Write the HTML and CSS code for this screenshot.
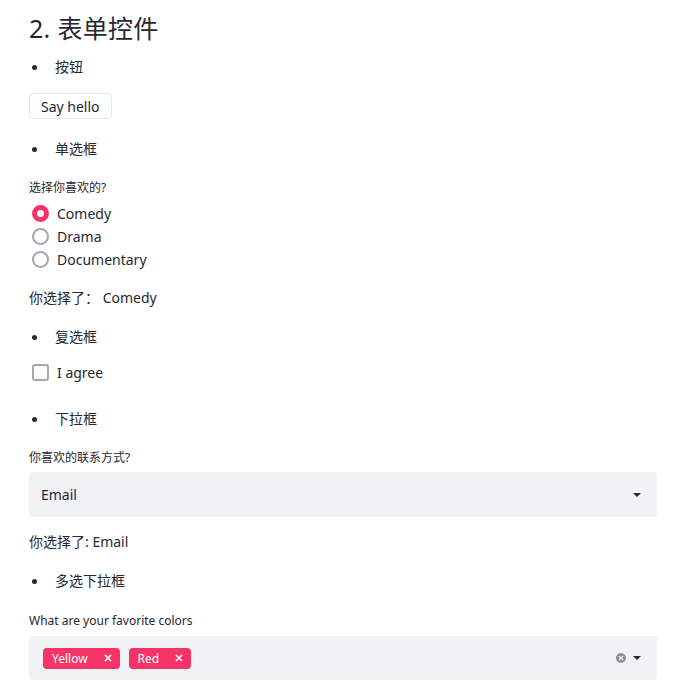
FILE: index.html
```html
<!DOCTYPE html>
<html lang="zh">
<head>
    <meta charset="UTF-8">
    <title>表单控件</title>
<link rel="stylesheet" href="styles.css">
</head>
<body>
    <div class="main">
        <h2 class="title">2. 表单控件</h2>

        <ul class="bullet"><li>按钮</li></ul>
        <button class="btn">Say hello</button>

        <ul class="bullet"><li>单选框</li></ul>
        <p class="label">选择你喜欢的?</p>
        <div class="radios">
            <div class="radio on"><span class="dot"></span>Comedy</div>
            <div class="radio"><span class="dot"></span>Drama</div>
            <div class="radio"><span class="dot"></span>Documentary</div>
        </div>
        <p class="text">你选择了： Comedy</p>

        <ul class="bullet"><li>复选框</li></ul>
        <div class="check"><span class="box"></span>I agree</div>

        <ul class="bullet"><li>下拉框</li></ul>
        <p class="label">你喜欢的联系方式?</p>
        <div class="select">
            <span>Email</span>
            <svg class="arrow" width="10" height="6" viewBox="0 0 10 6"><path d="M1 1h8L5 5z" fill="#262730"/></svg>
        </div>
        <p class="text">你选择了: Email</p>

        <ul class="bullet"><li>多选下拉框</li></ul>
        <p class="label latin">What are your favorite colors</p>
        <div class="select multi">
            <div class="tags">
                <span class="tag">Yellow<svg class="x" width="8" height="8" viewBox="0 0 8 8"><path d="M1 1l6 6M7 1l-6 6" stroke="#fff" stroke-width="1.6"/></svg></span>
                <span class="tag">Red<svg class="x" width="8" height="8" viewBox="0 0 8 8"><path d="M1 1l6 6M7 1l-6 6" stroke="#fff" stroke-width="1.6"/></svg></span>
            </div>
            <div class="icons">
                <svg width="12" height="12" viewBox="0 0 12 12"><circle cx="6" cy="6" r="5" fill="#8e8f99"/><path d="M4 4l4 4M8 4l-4 4" stroke="#f0f2f6" stroke-width="1.3"/></svg>
                <svg class="arrow" width="10" height="6" viewBox="0 0 10 6"><path d="M1 1h8L5 5z" fill="#262730"/></svg>
            </div>
        </div>
    </div>
</body>
</html>
```

FILE: styles.css
```css
*{
    margin: 0px;
    padding: 0px;
    box-sizing: border-box;
}
body{
    background: #fff;
    color: #262730;
    font-family: "Noto Sans", "Noto Sans CJK SC", sans-serif;
    font-size: 14px;
}
.main{
    width: 628px;
    margin-left: 29px;
    padding-top: 10px;
}
.title{
    font-size: 25px; font-weight: 400;
    line-height: 36px;
    letter-spacing: 0.3px;
}
.bullet{
    list-style: none;
    margin-top: 10px;
    line-height: 22px;
}
.bullet li{
    position: relative;
    padding-left: 26px;
}
.bullet li::before{
    content: "";
    position: absolute; left: 3px; top: 9px;
    width: 5px; height: 5px;
    border-radius: 50%;
    background: #262730;
}
.btn{
    margin-top: 15px;
    height: 26px;
    padding: 0 11px;
    font: inherit; font-size: 14px;
    color: #262730;
    background: #fff;
    border: 1px solid #e6e7eb;
    border-radius: 4px;
}
.btn + .bullet{
    margin-top: 19px;
}
.text + .bullet{
    margin-top: 17px;
}
.label{
    font-size: 12px;
    line-height: 16px;
    margin-top: 20px;
}
.label.latin{
    margin-top: 21px;
}
.radios{
    margin-top: 6px;
}
.radio, .check{
    display: flex; align-items: center;
    height: 23px;
}
.dot{
    width: 17px; height: 17px;
    border: 2px solid #a4a6b0;
    border-radius: 50%;
    margin: 0 8px 0 3px;
    background: #fff;
}
.radio.on .dot{
    border: 5px solid #f63366;
    background: #fff;
}
.text{
    margin-top: 16px;
    line-height: 22px;
}
.select + .text{
    margin-top: 14px;
}
.check{
    margin-top: 13px;
}
.box{
    width: 17px; height: 17px;
    border: 2px solid #a4a6b0;
    border-radius: 3px;
    margin: 0 8px 0 3px;
}
.check + .bullet{
    margin-top: 24px;
}
.select{
    margin-top: 6px;
    height: 45px;
    background: #f0f2f6;
    border-radius: 4px;
    display: flex; align-items: center; justify-content: space-between;
    padding: 0 15px 0 12px;
}
.multi{
    margin-top: 7px;
    height: 44px;
    padding-left: 14px;
}
.tags{
    display: flex; gap: 9px;
}
.tag{
    display: flex; align-items: center;
    height: 21px;
    padding: 0 8px 0 9px;
    background: #f63366;
    color: #fff;
    border-radius: 4px;
    font-size: 12px;
}
.tag .x{
    margin-left: 16px;
}
.icons{
    display: flex; align-items: center; gap: 5px;
}
```
